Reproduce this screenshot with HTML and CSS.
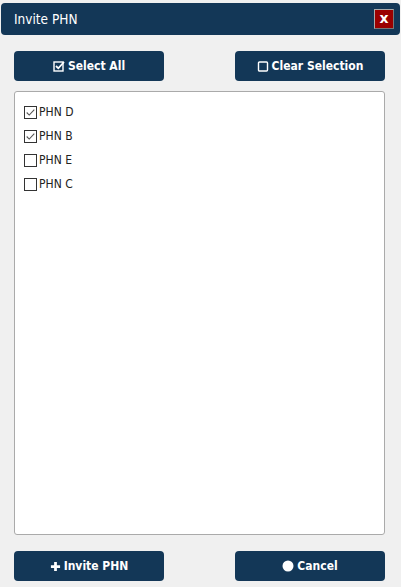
FILE: index.html
```html
<!DOCTYPE html>
<html>
<head>
<meta charset="utf-8">
<link rel="stylesheet" href="styles.css">
</head>
<body>
<div class="dialog">
  <div class="titlebar">
    <span class="title">Invite PHN</span>
    <span class="close">x</span>
  </div>
  <div class="toolbar">
    <button class="btn"><svg class="ico" viewBox="0 0 12 12" width="12" height="12"><rect x="1" y="2" width="9" height="9" fill="none" stroke="#fff" stroke-width="1.4"/><path d="M3 6 L5.3 8.3 L11 2" fill="none" stroke="#fff" stroke-width="1.8"/></svg>Select All</button>
    <button class="btn"><svg class="ico" viewBox="0 0 12 12" width="12" height="12"><rect x="1.5" y="2" width="9" height="9" rx="1" fill="none" stroke="#fff" stroke-width="1.4"/></svg>Clear Selection</button>
  </div>
  <div class="list">
    <label class="item"><span class="cb checked"><svg viewBox="0 0 13 13" width="11" height="11"><path d="M2 6.5 L5 9.5 L11 3" fill="none" stroke="#555" stroke-width="1.3"/></svg></span>PHN D</label>
    <label class="item"><span class="cb checked"><svg viewBox="0 0 13 13" width="11" height="11"><path d="M2 6.5 L5 9.5 L11 3" fill="none" stroke="#555" stroke-width="1.3"/></svg></span>PHN B</label>
    <label class="item"><span class="cb"></span>PHN E</label>
    <label class="item"><span class="cb"></span>PHN C</label>
  </div>
  <div class="footer">
    <button class="btn"><svg class="ico" viewBox="0 0 12 12" width="11" height="11"><path d="M6 1 V11 M1 6 H11" stroke="#fff" stroke-width="3"/></svg>Invite PHN</button>
    <button class="btn"><svg class="ico" viewBox="0 0 12 12" width="12" height="12"><circle cx="6" cy="6" r="5.5" fill="#fff"/></svg>Cancel</button>
  </div>
</div>
</body>
</html>
```
FILE: styles.css
```css
html, body {
  margin: 0;
  padding: 0;
  background: #f0f0f0;
}
body {
  font-family: "DejaVu Sans Condensed", "DejaVu Sans", sans-serif;
  width: 401px;
  height: 587px;
  overflow: hidden;
}
.dialog {
  padding-top: 3px;
}
.titlebar {
  margin: 0 1px;
  height: 32px;
  background: #133757;
  border-radius: 4px;
  display: flex;
  align-items: center;
  justify-content: space-between;
  padding: 0 6px 0 13px;
}
.title {
  color: #fff;
  font-size: 13.5px;
}
.close {
  width: 18px;
  height: 18px;
  background: #9b0000;
  border: 1px solid #aaa;
  border-right-color: #777;
  border-bottom-color: #777;
  color: #fff;
  font-weight: bold;
  font-size: 14px;
  line-height: 16px;
  text-align: center;
  font-family: "DejaVu Sans", sans-serif;
}
.toolbar, .footer {
  display: flex;
  justify-content: space-between;
  padding: 0 16px 0 14px;
}
.toolbar {
  margin-top: 16px;
}
.footer {
  margin-top: 16px;
}
.btn {
  width: 150px;
  height: 30px;
  background: #133757;
  border: none;
  border-radius: 4px;
  color: #fff;
  font-family: "DejaVu Sans Condensed", "DejaVu Sans", sans-serif;
  font-weight: bold;
  font-size: 12px;
  display: flex;
  align-items: center;
  justify-content: center;
  gap: 3px;
  padding: 0;
}
.ico {
  display: block;
}
.list {
  margin: 10px 16px 0 14px;
  height: 434px;
  background: #fff;
  border: 1px solid #aaa;
  border-radius: 3px;
  padding-top: 8px;
  box-sizing: content-box;
}
.item {
  display: flex;
  align-items: center;
  height: 24px;
  padding-left: 9px;
  font-size: 12px;
  color: #222;
  gap: 2px;
}
.cb {
  width: 11px;
  height: 11px;
  border: 1px solid #333;
  display: flex;
  align-items: center;
  justify-content: center;
  background: #fff;
}
```
